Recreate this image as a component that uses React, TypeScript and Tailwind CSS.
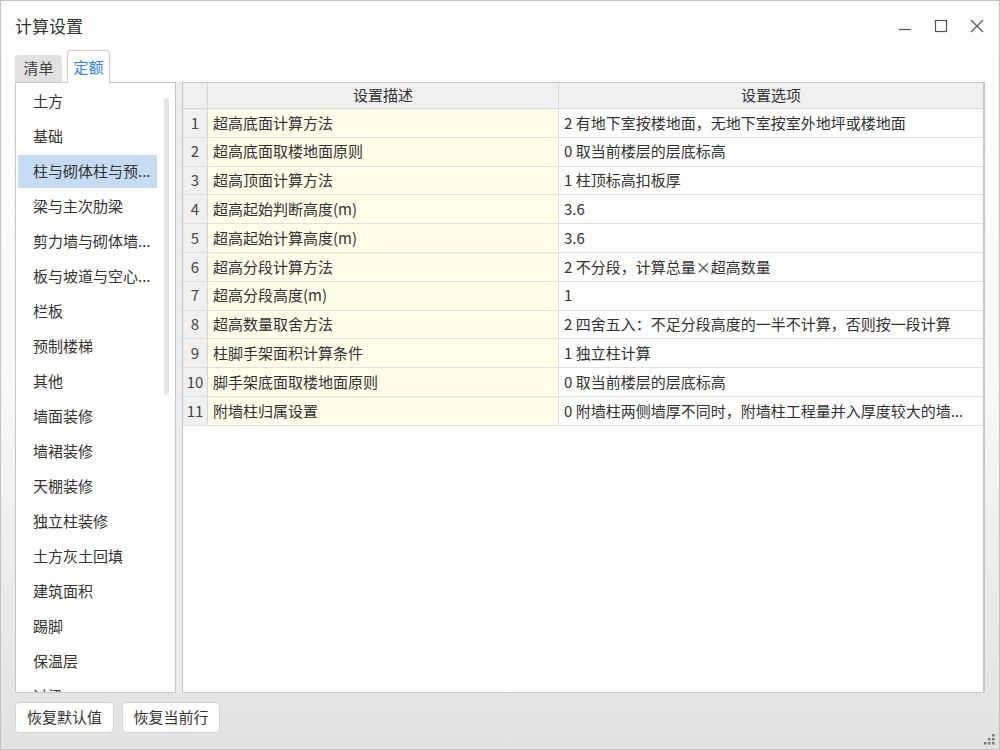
import React from "react";

const listItems = [
  "土方",
  "基础",
  "柱与砌体柱与预...",
  "梁与主次肋梁",
  "剪力墙与砌体墙...",
  "板与坡道与空心...",
  "栏板",
  "预制楼梯",
  "其他",
  "墙面装修",
  "墙裙装修",
  "天棚装修",
  "独立柱装修",
  "土方灰土回填",
  "建筑面积",
  "踢脚",
  "保温层",
  "过梁",
];

const rows: [string, string][] = [
  ["超高底面计算方法", "2 有地下室按楼地面，无地下室按室外地坪或楼地面"],
  ["超高底面取楼地面原则", "0 取当前楼层的层底标高"],
  ["超高顶面计算方法", "1 柱顶标高扣板厚"],
  ["超高起始判断高度(m)", "3.6"],
  ["超高起始计算高度(m)", "3.6"],
  ["超高分段计算方法", "2 不分段，计算总量×超高数量"],
  ["超高分段高度(m)", "1"],
  ["超高数量取舍方法", "2 四舍五入：不足分段高度的一半不计算，否则按一段计算"],
  ["柱脚手架面积计算条件", "1 独立柱计算"],
  ["脚手架底面取楼地面原则", "0 取当前楼层的层底标高"],
  ["附墙柱归属设置", "0 附墙柱两侧墙厚不同时，附墙柱工程量并入厚度较大的墙..."],
];

function WindowControls() {
  return (
    <div className="flex items-center gap-[22px] pr-[15px]">
      <svg width="14" height="14" viewBox="0 0 14 14">
        <line x1="1" y1="10.5" x2="13" y2="10.5" stroke="#555" strokeWidth="1.2" />
      </svg>
      <svg width="14" height="14" viewBox="0 0 14 14">
        <rect x="1.5" y="1.5" width="11" height="11" fill="none" stroke="#555" strokeWidth="1.2" />
      </svg>
      <svg width="14" height="14" viewBox="0 0 14 14">
        <path d="M1 1 L13 13 M13 1 L1 13" stroke="#555" strokeWidth="1.2" />
      </svg>
    </div>
  );
}

function ResizeGrip() {
  const dots = [
    [8, 0],
    [4, 4],
    [8, 4],
    [0, 8],
    [4, 8],
    [8, 8],
  ];
  return (
    <svg width="11" height="11" viewBox="0 0 11 11" className="absolute right-[4px] bottom-[4px]">
      {dots.map(([x, y], i) => (
        <rect key={i} x={x} y={y} width="2.5" height="2.5" fill="#7a7a7a" />
      ))}
    </svg>
  );
}

export default function App() {
  return (
    <div className="w-[1000px] h-[750px] relative overflow-hidden border border-[#c2c2c2] bg-gradient-to-b from-[#fefefe] via-[#f8f8f8] to-[#e2e2e2] font-['Noto_Sans_CJK_SC','Noto_Sans',sans-serif] text-[#333] flex flex-col">
      {/* 标题栏 */}
      <div className="h-[49px] flex items-center justify-between shrink-0">
        <div className="pl-[14px] text-[17px] text-[#333]">计算设置</div>
        <WindowControls />
      </div>

      {/* 选项卡 */}
      <div className="h-[32px] flex items-end pl-[14px] gap-[5px] shrink-0 relative z-10">
        <div className="w-[47px] h-[27px] rounded-t-[3px] bg-[#e1e1e1] flex items-center justify-center text-[15px] text-[#444]">
          清单
        </div>
        <div className="w-[43px] h-[33px] -mb-px rounded-t-[4px] bg-white border border-b-0 border-[#c8c8c8] flex items-center justify-center text-[15px] text-[#2f7fe0]">
          定额
        </div>
      </div>

      {/* 主体 */}
      <div className="h-[611px] flex px-[14px] shrink-0">
        <div className="w-[161px] h-full relative border border-[#c6c6c6] bg-white overflow-hidden pt-px flex flex-col">
          {listItems.map((item, i) => (
            <div
              key={item}
              className={
                "h-[33px] shrink-0 my-px ml-[2px] w-[139px] pl-[15px] flex items-center text-[15px] whitespace-nowrap " +
                (i === 2 ? "bg-[#c6dcf2]" : "")
              }
            >
              {item}
            </div>
          ))}
          <div className="absolute left-[148px] top-[15px] w-[5px] h-[297px] rounded-full bg-[#e4e4e4]" />
        </div>
        <div className="w-[6px] h-full bg-[#ececec]" />
        <div className="flex-1 h-full border border-[#c6c6c6] border-r-2 bg-white overflow-hidden">
          <div className="grid grid-cols-[25px_351px_1fr] h-[26px] bg-[#f0f0f0] border-b border-[#d6d6d6] text-[15px]">
            <div className="border-r border-[#d6d6d6]" />
            <div className="border-r border-[#d6d6d6] flex items-center justify-center">设置描述</div>
            <div className="flex items-center justify-center">设置选项</div>
          </div>
          {rows.map(([desc, opt], i) => (
            <div
              key={i}
              className="grid grid-cols-[25px_351px_1fr] h-[28.8px] border-b border-[#e0e0e0] text-[15px]"
            >
              <div className="bg-[#f0f0f0] border-r border-[#d6d6d6] flex items-center justify-center text-[#444]">
                {i + 1}
              </div>
              <div className="bg-[#fffce8] border-r border-[#dedede] flex items-center pl-[5px] whitespace-nowrap">
                {desc}
              </div>
              <div className="flex items-center pl-[5px] pr-[4px] whitespace-nowrap">
                {opt}
              </div>
            </div>
          ))}
        </div>
      </div>

      {/* 底部按钮 */}
      <div className="flex-1 flex items-start gap-[8px] pl-[14px] pt-[9px]">
        <button className="w-[99px] h-[31px] bg-white border border-[#d3d3d3] rounded-[4px] text-[15px] text-[#333]">
          恢复默认值
        </button>
        <button className="w-[98px] h-[31px] bg-white border border-[#d3d3d3] rounded-[4px] text-[15px] text-[#333]">
          恢复当前行
        </button>
      </div>
      <ResizeGrip />
    </div>
  );
}
